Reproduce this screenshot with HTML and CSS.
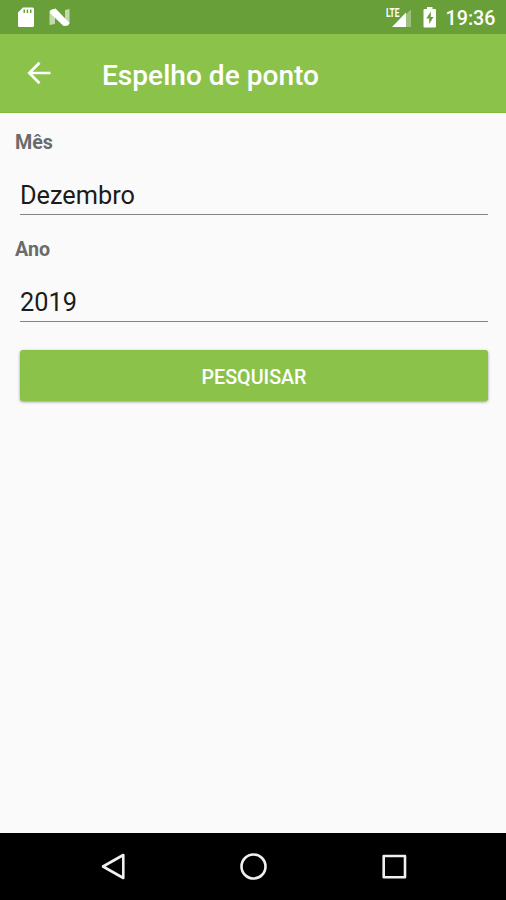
FILE: index.html
```html
<!DOCTYPE html>
<html lang="pt-BR">
<head>
<meta charset="utf-8">
<title>Espelho de ponto</title>
<link rel="stylesheet" href="styles.css">
</head>
<body>
<div class="screen">
  <div class="status-bar">
    <svg class="status-left" width="90" height="34" viewBox="0 0 90 34" fill="#fff">
      <path fill-rule="evenodd" d="M23 7.500H32.500Q34 7.500 34 9V25.500Q34 27 32.500 27H19.500Q18 27 18 25.500V12.500ZM23.500 9.500V13H25V9.500ZM26.700 9.500V13H28.200V9.500ZM30 9.500V13H31.500V9.500Z"/>
      <path opacity=".6" d="M49.500 11L55 9V24L49.500 25ZM65 10L69.500 9V24L65 26Z"/>
      <path d="M50.500 10L55.500 8.500L69.500 23L68 25.500L63.500 26L50 13Z"/>
    </svg>
    <div class="status-right">
      <svg width="27" height="34" viewBox="0 0 27 34" fill="#fff">
        <path opacity=".35" d="M25 9.500V27H20V14Z"/>
        <path d="M20 12.500V27H6Z"/>
        <text class="network" x="0" y="16.500" textLength="13.500" lengthAdjust="spacingAndGlyphs">LTE</text>
      </svg>
      <svg class="battery" width="16" height="34" viewBox="0 0 16 34">
        <path fill="#fff" d="M5 7H10.500V9H13Q14 9 14 10V26.500Q14 27.500 13 27.500H2.500Q1.500 27.500 1.500 26.500V10Q1.500 9 2.500 9H5Z"/>
        <path fill="#689f38" d="M8.800 11.500L4.300 18.500H7.200V24L11.500 17H8.800Z"/>
      </svg>
      <span class="clock">19:36</span>
    </div>
  </div>
  <header class="app-bar">
    <svg class="back" width="24" height="24" viewBox="0 0 24 24" fill="none" stroke="#fff" stroke-width="2.700"><path d="M23.500 12H3M12.500 1.800L2.300 12L12.500 22.200"/></svg>
    <h1 class="title">Espelho de ponto</h1>
  </header>
  <main class="form">
    <div class="field">
      <div class="label">Mês</div>
      <div class="value">Dezembro</div>
    </div>
    <div class="field">
      <div class="label">Ano</div>
      <div class="value">2019</div>
    </div>
    <button class="search">PESQUISAR</button>
  </main>
  <nav class="nav-bar">
    <svg width="506" height="67" viewBox="0 0 506 67" fill="none" stroke="#f0f0f0" stroke-width="2.600" stroke-linejoin="round">
      <path d="M103 33.500L123.300 22V45Z"/>
      <circle cx="253.500" cy="33.500" r="12"/>
      <rect x="383.700" y="23" width="21.300" height="21.300"/>
    </svg>
  </nav>
</div>
</body>
</html>
```
FILE: styles.css
```css
* { box-sizing: border-box; }
body { margin: 0; font-family: Roboto, sans-serif; }
svg { display: block; }
.screen { width: 506px; height: 900px; display: flex; flex-direction: column; background: #fafafa; }
.status-bar { height: 34px; display: flex; justify-content: space-between; background: #689f38; color: #fff; }
.status-right { display: flex; padding-right: 10.5px; }
.network { font-size: 12px; font-weight: 700; }
.battery { margin-left: 9px; margin-right: 8px; }
.clock { font-size: 19.7px; font-weight: 500; line-height: 38px; }
.app-bar { height: 79px; display: flex; align-items: center; padding: 0 0 1px 27px; background: #8bc34a; border-bottom: 1px solid #7fb93a; }
.title { margin: 6px 0 0 51px; color: #fff; font-size: 28.1px; font-weight: 500; line-height: 34px; }
.form { flex: 1; padding: 15px 18px 0 15px; }
.field { height: 107px; }
.label { color: #6b6b6b; font-size: 19.7px; font-weight: 700; line-height: 30px; }
.value { height: 57px; margin-left: 5px; padding-top: 21px; border-bottom: 1px solid #858585; color: #1c1c1c; font-size: 25.3px; line-height: 34px; }
.search { display: block; width: 468px; height: 51px; margin: 8px 0 0 5px; padding: 4px 0 0; border: 0; border-radius: 3px; background: #8bc34a; box-shadow: 0 1px 3px rgba(0, 0, 0, .4); color: #fff; font: 500 19.7px/48px Roboto, sans-serif; }
.nav-bar { height: 67px; background: #000; }
```
